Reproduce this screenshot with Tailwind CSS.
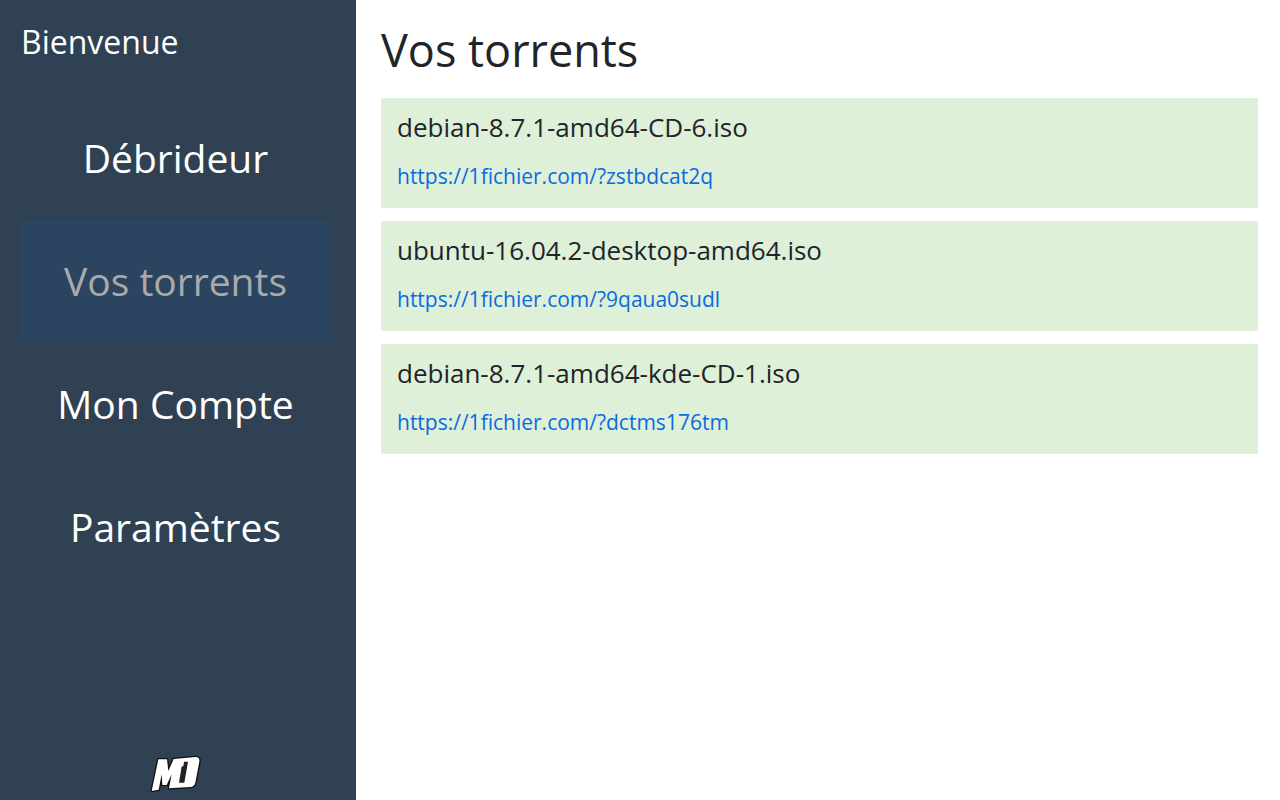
<!DOCTYPE html>
<html lang="fr">
<head>
  <meta charset="UTF-8">
  <meta name="viewport" content="width=device-width, initial-scale=1.0">
  <title>Vos torrents</title>
  <script src="https://cdn.jsdelivr.net/npm/@tailwindcss/browser@4"></script>
</head>
<body class="flex min-h-screen bg-white text-[#212529] font-['Open_Sans','Noto_Sans',sans-serif]">

  <!-- Menu -->
  <aside class="flex flex-col w-[356px] shrink-0 pl-[21px] pr-[26px] pt-[18px] pb-[5px] bg-[#2f4152] text-white">
    <p class="text-[32px] leading-[48px]">Bienvenue</p>
    <nav class="flex flex-col mt-[30px] text-center text-[39px] leading-[59px]">
      <a href="#" class="py-8">Débrideur</a>
      <a href="#" class="py-8 bg-[#2b4560] text-[#aaaaaa]" aria-current="page">Vos torrents</a>
      <a href="#" class="py-8">Mon Compte</a>
      <a href="#" class="py-8">Paramètres</a>
    </nav>

    <!-- Logo -->
    <svg class="mt-auto mx-auto w-[52px] h-10" viewBox="15 12 156 120" role="img" aria-label="MD">
      <g stroke-linejoin="round">
        <path d="M40 25H66L70 60 86 24 152 18Q165 19 163 32L151 95Q148 107 136 108L72 112 80 70 65 102H52L50 70 41 116 20 120Z" fill="#111" stroke="#111" stroke-width="8"/>
        <path d="M40 25H66L70 60 86 24 152 18Q165 19 163 32L151 95Q148 107 136 108L72 112 80 70 65 102H52L50 70 41 116 20 120Z" fill="#fff"/>
        <path d="M117 32H129L118 95H102L110 46H115Z" fill="#222"/>
      </g>
    </svg>
  </aside>

  <!-- Liste des torrents -->
  <main class="flex-1 min-w-0 pl-[25px] pr-[22px] pt-[17px]">
    <h1 class="text-[45px] leading-[66px]">Vos torrents</h1>
    <ul class="flex flex-col gap-[13px] mt-[15px]">
      <li class="h-[110px] px-4 pt-3 bg-[#dff0d8]">
        <h2 class="text-[26px] leading-[34px]">debian-8.7.1-amd64-CD-6.iso</h2>
        <a href="#" class="block mt-[15px] text-[21px] leading-[34px] text-[#0a6be0]">https://1fichier.com/?zstbdcat2q</a>
      </li>
      <li class="h-[110px] px-4 pt-3 bg-[#dff0d8]">
        <h2 class="text-[26px] leading-[34px]">ubuntu-16.04.2-desktop-amd64.iso</h2>
        <a href="#" class="block mt-[15px] text-[21px] leading-[34px] text-[#0a6be0]">https://1fichier.com/?9qaua0sudl</a>
      </li>
      <li class="h-[110px] px-4 pt-3 bg-[#dff0d8]">
        <h2 class="text-[26px] leading-[34px]">debian-8.7.1-amd64-kde-CD-1.iso</h2>
        <a href="#" class="block mt-[15px] text-[21px] leading-[34px] text-[#0a6be0]">https://1fichier.com/?dctms176tm</a>
      </li>
    </ul>
  </main>

</body>
</html>
